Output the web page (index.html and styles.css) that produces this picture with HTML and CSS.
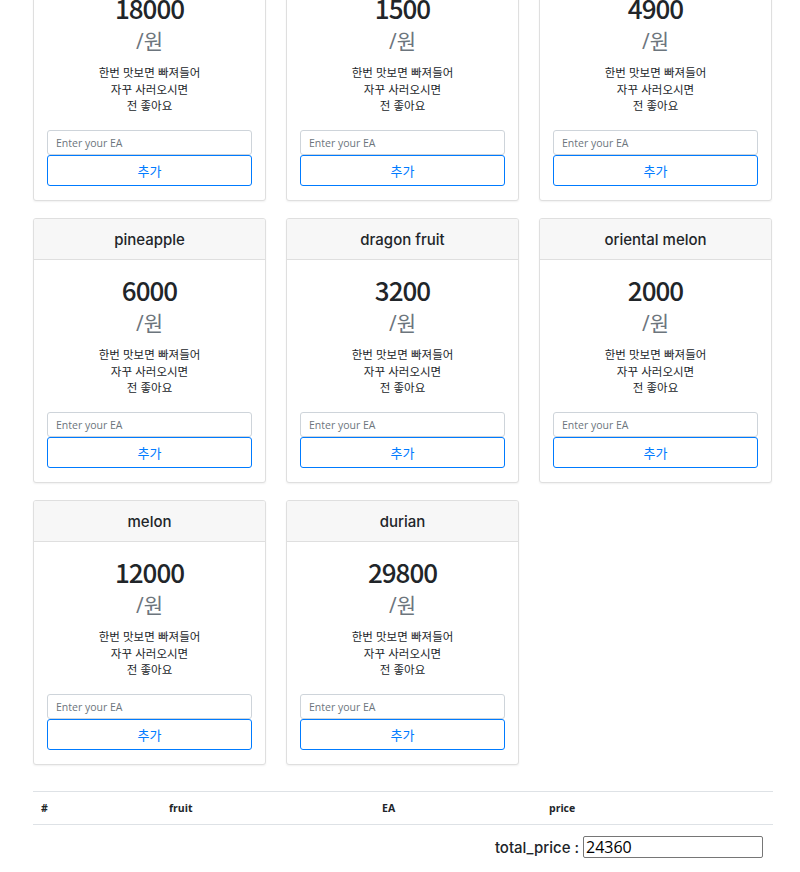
FILE: index.html
```html
<!DOCTYPE html>
<html lang="ko">
<head>
<meta charset="utf-8">
<title>fruit shop</title>
<link rel="stylesheet" href="styles.css">
</head>
<body>
<div class="page">
  <div class="deck">
    <div class="card"><div class="card-header">apple</div><div class="card-body"><div class="price">18000</div><div class="unit">/원</div><ul class="desc"><li>한번 맛보면 빠져들어</li><li>자꾸 사러오시면</li><li>전 좋아요</li></ul><input class="ea" type="text" placeholder="Enter your EA"><button class="add">추가</button></div></div>
    <div class="card"><div class="card-header">banana</div><div class="card-body"><div class="price">1500</div><div class="unit">/원</div><ul class="desc"><li>한번 맛보면 빠져들어</li><li>자꾸 사러오시면</li><li>전 좋아요</li></ul><input class="ea" type="text" placeholder="Enter your EA"><button class="add">추가</button></div></div>
    <div class="card"><div class="card-header">grape</div><div class="card-body"><div class="price">4900</div><div class="unit">/원</div><ul class="desc"><li>한번 맛보면 빠져들어</li><li>자꾸 사러오시면</li><li>전 좋아요</li></ul><input class="ea" type="text" placeholder="Enter your EA"><button class="add">추가</button></div></div>
    <div class="card"><div class="card-header">pineapple</div><div class="card-body"><div class="price">6000</div><div class="unit">/원</div><ul class="desc"><li>한번 맛보면 빠져들어</li><li>자꾸 사러오시면</li><li>전 좋아요</li></ul><input class="ea" type="text" placeholder="Enter your EA"><button class="add">추가</button></div></div>
    <div class="card"><div class="card-header">dragon fruit</div><div class="card-body"><div class="price">3200</div><div class="unit">/원</div><ul class="desc"><li>한번 맛보면 빠져들어</li><li>자꾸 사러오시면</li><li>전 좋아요</li></ul><input class="ea" type="text" placeholder="Enter your EA"><button class="add">추가</button></div></div>
    <div class="card"><div class="card-header">oriental melon</div><div class="card-body"><div class="price">2000</div><div class="unit">/원</div><ul class="desc"><li>한번 맛보면 빠져들어</li><li>자꾸 사러오시면</li><li>전 좋아요</li></ul><input class="ea" type="text" placeholder="Enter your EA"><button class="add">추가</button></div></div>
    <div class="card"><div class="card-header">melon</div><div class="card-body"><div class="price">12000</div><div class="unit">/원</div><ul class="desc"><li>한번 맛보면 빠져들어</li><li>자꾸 사러오시면</li><li>전 좋아요</li></ul><input class="ea" type="text" placeholder="Enter your EA"><button class="add">추가</button></div></div>
    <div class="card"><div class="card-header">durian</div><div class="card-body"><div class="price">29800</div><div class="unit">/원</div><ul class="desc"><li>한번 맛보면 빠져들어</li><li>자꾸 사러오시면</li><li>전 좋아요</li></ul><input class="ea" type="text" placeholder="Enter your EA"><button class="add">추가</button></div></div>
  </div>
  <table class="cart">
    <thead><tr><th class="c-num">#</th><th class="c-fruit">fruit</th><th class="c-ea">EA</th><th class="c-price">price</th></tr></thead>
    <tbody></tbody>
  </table>
  <div class="total"><span class="total-label">total_price :</span> <input class="total-input" type="text" value="24360"></div>
</div>
</body>
</html>
```

FILE: styles.css
```css
html, body { margin: 0; padding: 0; background: #fff; }
body {
  font-family: "Open Sans", "Noto Sans", "Noto Sans CJK KR", sans-serif;
  color: #212529;
}
.page {
  width: 740px;
  padding-left: 33px;
  margin-top: -64px;
}
.deck {
  display: grid;
  grid-template-columns: repeat(3, 233px);
  column-gap: 20px;
  row-gap: 17px;
}
.card {
  border: 1px solid #dfdfdf;
  border-radius: 3px;
  box-shadow: 0 1px 2px rgba(0,0,0,0.06);
  background: #fff;
  text-align: center;
  overflow: hidden;
}
.card-header {
  height: 40px;
  line-height: 41px;
  background: #f7f7f7;
  border-bottom: 1px solid #dfdfdf;
  font-family: Inter, "Open Sans", sans-serif;
  font-size: 15px;
  font-weight: 500;
  color: #212529;
}
.card-body {
  padding: 14px 13px;
  display: flex;
  flex-direction: column;
}
.price {
  font-family: "Noto Sans CJK KR", sans-serif;
  font-size: 26px;
  line-height: 32px;
  font-weight: 500;
  letter-spacing: -1px;
}
.unit {
  font-size: 21px;
  line-height: 34px;
  color: #6c757d;
  font-family: "Open Sans", "Noto Sans CJK KR", sans-serif;
}
.desc {
  list-style: none;
  margin: 6px 0 16.5px;
  padding: 0;
  font-family: "Noto Sans CJK KR", sans-serif;
  font-size: 11.5px;
  line-height: 16.5px;
}
.ea {
  box-sizing: border-box;
  height: 25px;
  width: 100%;
  margin: 0;
  border: 1px solid #ced4da;
  border-radius: 3px;
  padding: 0 8px;
  font-family: "Open Sans", sans-serif;
  font-size: 10.5px;
  color: #495057;
}
.ea::placeholder { color: #6c757d; }
.add {
  box-sizing: border-box;
  height: 31px;
  width: 100%;
  margin: 0;
  border: 1px solid #007bff;
  border-radius: 3px;
  background: #fff;
  color: #007bff;
  font-family: "Noto Sans CJK KR", sans-serif;
  font-size: 13px;
}
.cart {
  width: 740px;
  margin-top: 26px;
  border-collapse: collapse;
}
.cart th {
  border-top: 1px solid #dee2e6;
  border-bottom: 1px solid #dee2e6;
  padding: 10px 8px 9px;
  font-size: 10.5px;
  line-height: 13px;
  font-weight: 700;
  text-align: left;
}
.c-num { width: 112px; }
.c-fruit { width: 197px; }
.c-ea { width: 151px; }
.total {
  margin-top: 11px;
  text-align: right;
  padding-right: 10px;
  font-family: Inter, "Open Sans", sans-serif;
  font-size: 15px;
  font-weight: 500;
}
.total-label { vertical-align: middle; }
.total-input {
  box-sizing: border-box;
  width: 180px;
  height: 22px;
  border: 1px solid #767676;
  border-radius: 2px;
  padding: 0 2px;
  font-family: "Open Sans", sans-serif;
  font-size: 16px;
  font-weight: 400;
  color: #000;
  vertical-align: middle;
}
```
